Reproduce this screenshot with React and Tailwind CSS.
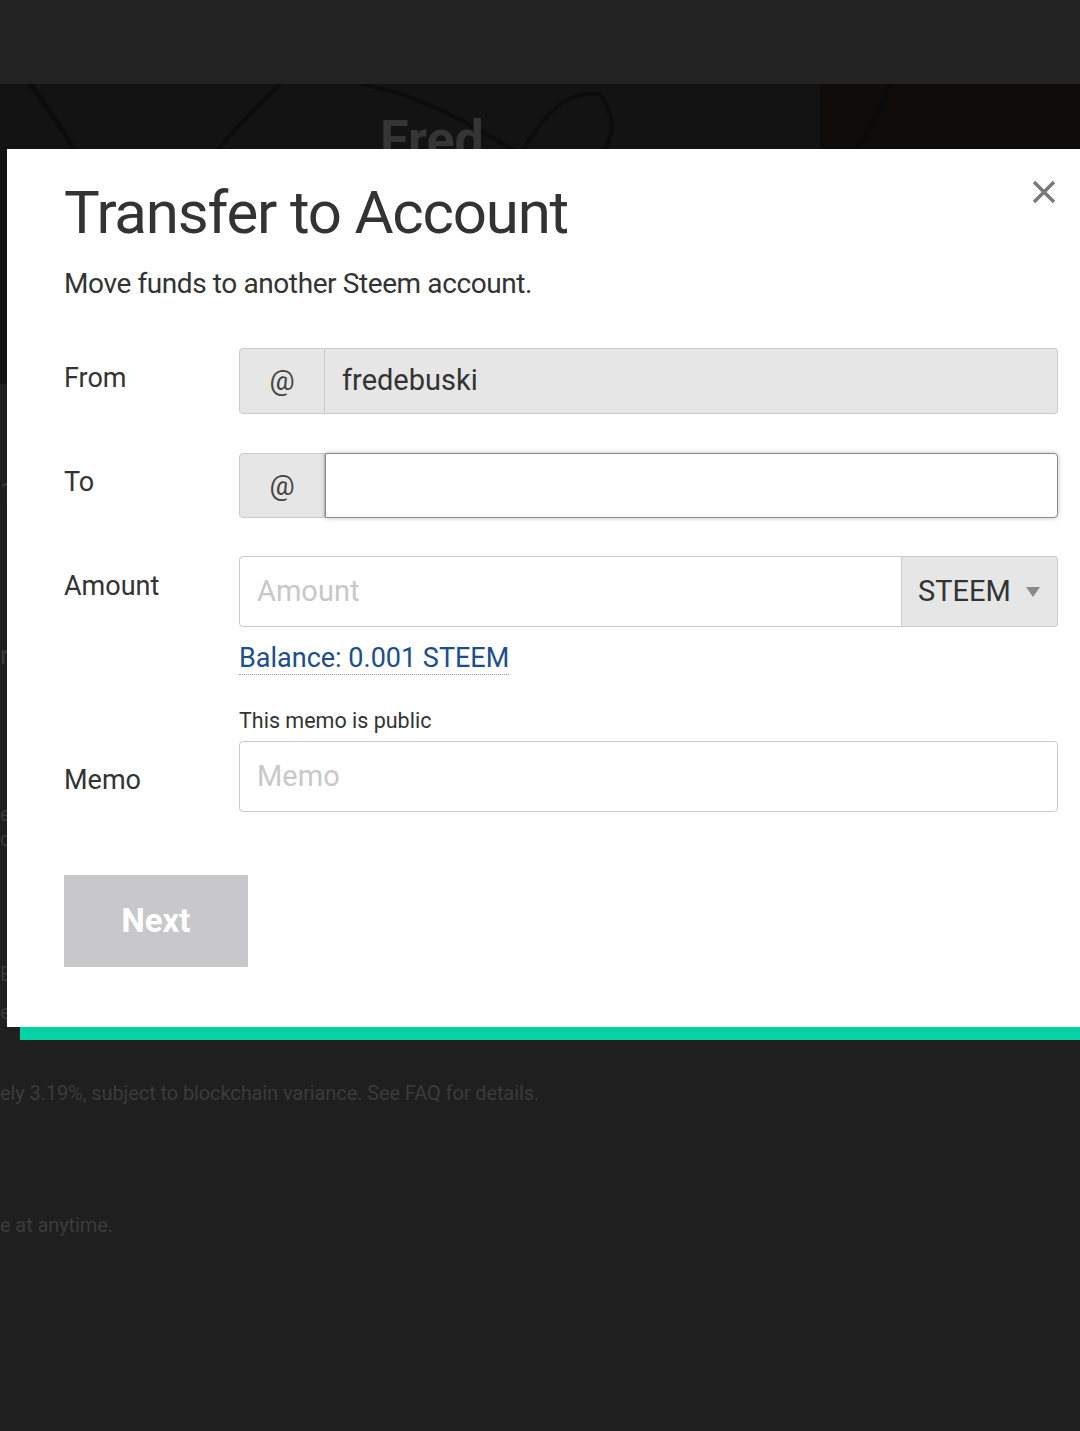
import React from "react";

function AtAddon() {
  return (
    <div className="w-[86px] shrink-0 flex items-center justify-center bg-[#e6e6e6] border border-[#cacaca] rounded-l-[4px] text-[28px] text-[#444]">
      @
    </div>
  );
}

export default function App() {
  return (
    <div
      className="relative w-[1080px] h-[1431px] bg-[#1f1f1f] overflow-hidden"
      style={{ fontFamily: "Roboto, 'Noto Sans', sans-serif" }}
    >
      {/* background page */}
      <div className="h-[84px] bg-[#222222]" />
      <div className="relative h-[300px] bg-[#131313] overflow-hidden">
        <svg className="absolute inset-0" width="1080" height="300" viewBox="0 0 1080 300">
          <rect x="820" y="0" width="260" height="300" fill="#0e0b09" />
          <path d="M30 0 C 60 40, 80 70, 100 120" stroke="#0c0c0c" strokeWidth="5" fill="none" />
          <path d="M280 0 C 250 30, 230 50, 215 70" stroke="#0c0c0c" strokeWidth="4" fill="none" />
          <path d="M360 0 C 420 10, 470 40, 520 70" stroke="#0c0c0c" strokeWidth="4" fill="none" />
          <path d="M520 70 C 540 40, 560 5, 600 10 C 620 40, 610 60, 600 70" stroke="#0c0c0c" strokeWidth="4" fill="none" />
          <path d="M890 0 C 880 30, 860 60, 850 75" stroke="#0a0a0a" strokeWidth="4" fill="none" />
        </svg>
        <div className="absolute left-[380px] top-[30px] text-[52px] font-bold text-[#353535] leading-none">
          Fred
        </div>
      </div>
      <div className="relative text-[#3a3a3a] text-[26px]">
        <div className="absolute left-0 top-[95px] leading-none">1</div>
        <div className="absolute left-0 top-[258px] leading-none">r</div>
        <div className="absolute left-0 top-[420px] text-[20px] leading-none">e</div>
        <div className="absolute left-0 top-[445px] text-[20px] leading-none">c</div>
        <div className="absolute left-0 top-[580px] text-[20px] leading-none">E</div>
        <div className="absolute left-0 top-[618px] text-[20px] leading-none">e</div>
      </div>
      <div className="absolute left-0 top-[1078px] text-[20px] tracking-[-0.1px] text-[#3b3b3b] whitespace-nowrap">
        ely 3.19%, subject to blockchain variance. See FAQ for details.
      </div>
      <div className="absolute left-0 top-[1210px] text-[20px] tracking-[-0.1px] text-[#3b3b3b] whitespace-nowrap">
        e at anytime.
      </div>

      {/* teal strip under modal */}
      <div className="absolute left-[20px] top-[1027px] w-[1060px] h-[13px] bg-[#07d2a6]" />

      {/* modal */}
      <div className="absolute left-[7px] top-[149px] w-[1073px] h-[878px] bg-white pl-[57px] pr-[22px] pt-[28px] text-[#333]">
        <button className="absolute right-[24px] top-[31px] w-[24px] h-[24px] flex items-center justify-center">
          <svg width="24" height="24" viewBox="0 0 24 24">
            <path d="M2 2 L22 22 M22 2 L2 22" stroke="#7a7a7a" strokeWidth="3.6" strokeLinecap="butt" />
          </svg>
        </button>

        <h1 className="text-[60px] leading-[72px] text-[#333] tracking-[-1.2px]">Transfer to Account</h1>
        <p className="mt-[18px] text-[28px] leading-[34px] text-[#333] tracking-[-0.4px]">
          Move funds to another Steem account.
        </p>

        <div className="mt-[47px] grid grid-cols-[175px_819px]">
          {/* From */}
          <div className="pt-[14px] text-[27px] leading-[32px]">From</div>
          <div className="flex h-[66px]">
            <AtAddon />
            <div className="flex-1 flex items-center pl-[17px] bg-[#e6e6e6] border border-l-0 border-[#cacaca] rounded-r-[4px] text-[29px] text-[#333]">
              fredebuski
            </div>
          </div>

          {/* To */}
          <div className="mt-[39px] pt-[13px] text-[27px] leading-[32px]">To</div>
          <div className="mt-[39px] flex h-[65px]">
            <AtAddon />
            <div className="flex-1 bg-white border-[1.5px] border-[#8a8a8a] rounded-r-[4px] shadow-[0_0_5px_rgba(0,0,0,0.25)]" />
          </div>

          {/* Amount */}
          <div className="mt-[38px] pt-[14px] text-[27px] leading-[32px]">Amount</div>
          <div className="mt-[38px]">
            <div className="flex h-[71px]">
              <div className="flex-1 flex items-center pl-[17px] bg-white border border-[#cacaca] rounded-l-[4px] text-[29px] text-[#c8c8c8]">
                Amount
              </div>
              <div className="w-[156px] flex items-center pl-[16px] bg-[#e6e6e6] border border-l-0 border-[#cacaca] rounded-r-[4px] text-[29px] text-[#333]">
                STEEM
                <svg className="ml-[15px]" width="14" height="10" viewBox="0 0 14 10">
                  <path d="M0 0 L14 0 L7 10 Z" fill="#8a8a8a" />
                </svg>
              </div>
            </div>
            <div className="mt-[15px]">
              <span className="inline-block text-[27px] leading-[32px] text-[#1a4f8b] border-b border-dotted border-[#8aa0bd]">
                Balance: 0.001 STEEM
              </span>
            </div>
          </div>

          {/* Memo */}
          <div className="mt-[33px] pt-[56px] text-[27px] leading-[32px]">Memo</div>
          <div className="mt-[33px]">
            <div className="text-[21.5px] leading-[26px] text-[#333]">This memo is public</div>
            <div className="mt-[7px] h-[71px] flex items-center pl-[17px] bg-white border border-[#cacaca] rounded-[4px] text-[29px] text-[#c8c8c8]">
              Memo
            </div>
          </div>
        </div>

        <button className="mt-[63px] w-[184px] h-[92px] bg-[#c8c8ca] text-white font-bold text-[33px] flex items-center justify-center">
          Next
        </button>
      </div>
    </div>
  );
}
